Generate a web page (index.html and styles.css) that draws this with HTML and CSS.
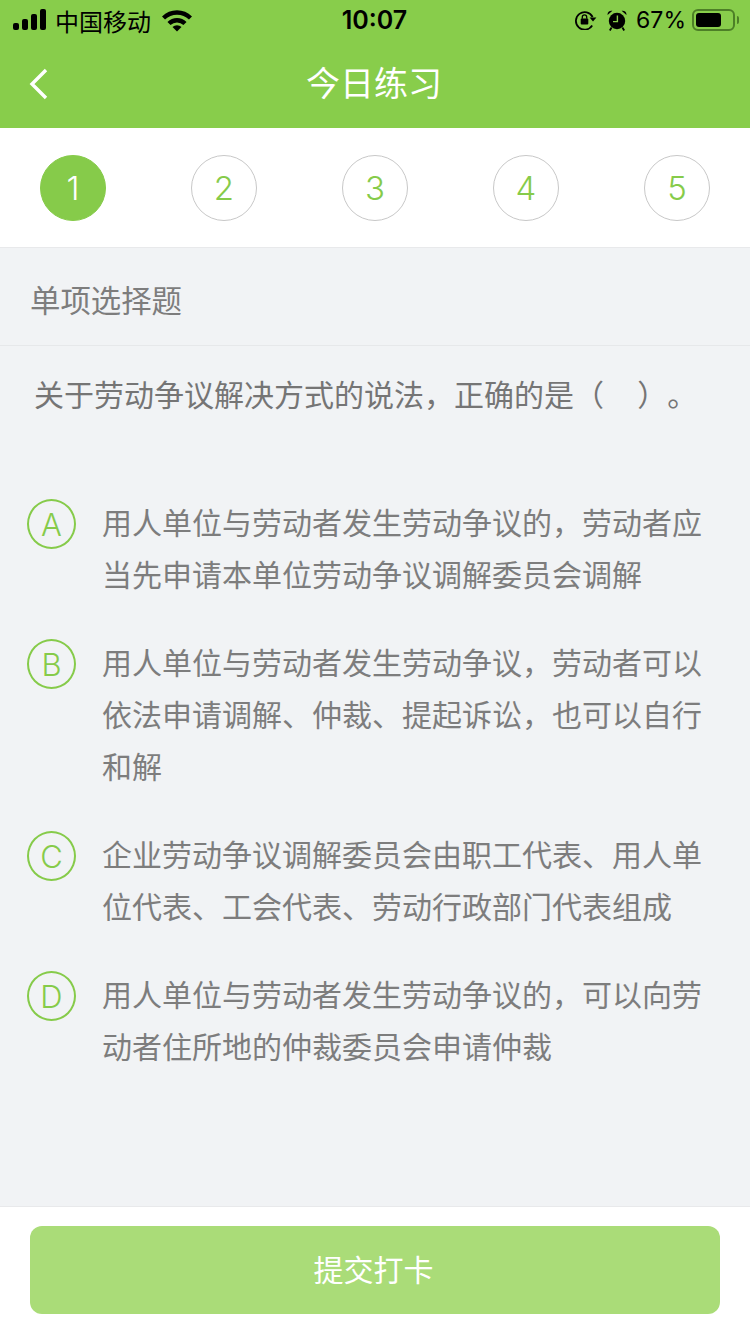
FILE: index.html
```html
<!DOCTYPE html>
<html lang="zh-CN">
<head>
  <meta charset="UTF-8" />
  <title>今日练习</title>
  <link rel="stylesheet" href="styles.css">
</head>
<body>

<div class="page">
  <header class="top">
    <div class="status">
      <div class="status-left">
        <svg class="signal" width="34" height="22" viewBox="0 0 34 22">
          <rect x="0" y="14" width="6" height="7" rx="2" />
          <rect x="9" y="10" width="6" height="11" rx="2" />
          <rect x="18" y="5" width="6" height="16" rx="2" />
          <rect x="27" y="0" width="6" height="21" rx="2" />
        </svg>
        <span class="carrier">中国移动</span>
        <svg class="wifi" width="30" height="23" viewBox="0 0 30 23">
          <path d="M1.5 9 A19.5 19.5 0 0 1 28.5 9" fill="none" stroke="#000" stroke-width="4.4" />
          <path d="M7 14.5 A11.5 11.5 0 0 1 23 14.5" fill="none" stroke="#000" stroke-width="4.4" />
          <path d="M15 22.5 L10.5 18 A6.5 6.5 0 0 1 19.5 18 Z" />
        </svg>
      </div>
      <div class="time">10:07</div>
      <div class="status-right">
        <svg class="orient" width="22" height="20" viewBox="0 0 22 20">
          <path d="M17.2 15.5 A8.8 8.8 0 1 1 17.6 7" fill="none" stroke="#000" stroke-width="1.8" />
          <path d="M14.6 7.5 L21.4 7.5 L18 11.5 Z" />
          <rect x="5.7" y="8.6" width="7.6" height="6" rx="1" />
          <path d="M7.3 8.8 V7 A2.2 2.2 0 0 1 11.7 7 V8.8" fill="none" stroke="#000" stroke-width="1.3" />
        </svg>
        <svg class="alarm" width="20" height="21" viewBox="0 0 20 21">
          <circle cx="10" cy="11" r="8.2" />
          <path d="M0.6 5 A3.8 3.8 0 0 1 5.4 0.8 Z M19.4 5 A3.8 3.8 0 0 0 14.6 0.8 Z" />
          <path d="M10.4 5.6 V11.6 H6" fill="none" stroke="#88cd4b" stroke-width="1.4" />
          <path d="M4.6 17.5 L2.8 20.5 M15.4 17.5 L17.2 20.5" stroke="#000" stroke-width="1.8" />
        </svg>
        <span class="battery-pct">67%</span>
        <div class="battery"><div class="battery-fill"></div></div>
        <div class="battery-tip"></div>
      </div>
    </div>
    <div class="nav">
      <svg class="back" width="20" height="32" viewBox="0 0 20 32">
        <path d="M17 2 L3 16 L17 30" fill="none" stroke="#fff" stroke-width="3.4" />
      </svg>
      <h1>今日练习</h1>
    </div>
  </header>

  <nav class="steps">
    <span class="step active">1</span>
    <span class="step">2</span>
    <span class="step">3</span>
    <span class="step">4</span>
    <span class="step">5</span>
  </nav>

  <main class="content">
    <div class="qtype">单项选择题</div>
    <p class="question">关于劳动争议解决方式的说法，正确的是（&nbsp;&nbsp;&nbsp;&nbsp;）<span class="stop">。</span></p>

    <ul class="options">
      <li class="option">
        <span class="letter">A</span>
        <p>用人单位与劳动者发生劳动争议的，劳动者应当先申请本单位劳动争议调解委员会调解</p>
      </li>
      <li class="option">
        <span class="letter">B</span>
        <p>用人单位与劳动者发生劳动争议，劳动者可以依法申请调解、仲裁、提起诉讼，也可以自行和解</p>
      </li>
      <li class="option">
        <span class="letter">C</span>
        <p>企业劳动争议调解委员会由职工代表、用人单位代表、工会代表、劳动行政部门代表组成</p>
      </li>
      <li class="option">
        <span class="letter">D</span>
        <p>用人单位与劳动者发生劳动争议的，可以向劳动者住所地的仲裁委员会申请仲裁</p>
      </li>
    </ul>
  </main>

  <footer class="bottom">
    <button type="button" class="submit">提交打卡</button>
  </footer>
</div>

</body>
</html>
```

FILE: styles.css
```css
* {
  box-sizing: border-box;
}
body {
  margin: 0;
  background: #f1f3f5;
  font-family: "Liberation Sans", "Noto Sans CJK SC", sans-serif;
}
.page {
  width: 750px;
  height: 1334px;
  display: flex;
  flex-direction: column;
  overflow: hidden;
}

/* header */
.top {
  height: 128px;
  background: #88cd4b;
}
.status {
  height: 40px;
  padding: 0 11px 0 13px;
  display: flex;
  align-items: center;
  justify-content: space-between;
  color: #000;
}
.status-left, .status-right {
  width: 260px;
  display: flex;
  align-items: center;
}
.status-right {
  justify-content: flex-end;
}
.carrier {
  margin-left: 8px;
  font-size: 24px;
}
.wifi {
  margin-left: 11px;
}
.time {
  margin-right: 3px;
  font-size: 25px;
  font-family: "Inter", "Liberation Sans", sans-serif;
  font-weight: 600;
}
.alarm {
  margin-left: 10px;
}
.battery-pct {
  margin-left: 9px;
  font-size: 23px;
  font-family: "Inter", "Liberation Sans", sans-serif;
  font-weight: 400;
}
.battery {
  width: 43px;
  height: 22px;
  margin-left: 6px;
  padding: 2px;
  border: 2px solid #4d7f27;
  border-radius: 6px;
}
.battery-fill {
  width: 25px;
  height: 100%;
  background: #000;
  border-radius: 3px;
}
.battery-tip {
  width: 2px;
  height: 8px;
  margin-left: 2px;
  background: #4d7f27;
  border-radius: 0 2px 2px 0;
}
.nav {
  position: relative;
  height: 88px;
  padding: 0 2px 5px 0;
  display: flex;
  align-items: center;
  justify-content: center;
}
.back {
  position: absolute;
  left: 29px;
  top: 28px;
}
.nav h1 {
  margin: 0;
  color: #fff;
  font-size: 34px;
  font-weight: 400;
  font-family: "Noto Sans CJK SC", sans-serif;
}

/* steps */
.steps {
  height: 120px;
  padding: 0 40px;
  background: #fff;
  border-bottom: 1px solid #e8e9eb;
  display: flex;
  align-items: center;
  justify-content: space-between;
}
.step {
  width: 66px;
  height: 66px;
  border: 1px solid #c8c8c8;
  border-radius: 50%;
  display: flex;
  align-items: center;
  justify-content: center;
  color: #86cb4a;
  font-family: "Inter", "Liberation Sans", sans-serif;
  font-weight: 300;
  font-size: 33px;
}
.step.active {
  background: #86cb4a;
  border-color: #86cb4a;
  color: #fff;
}

/* question */
.content {
  flex: 1;
}
.qtype {
  height: 98px;
  padding: 5px 0 0 30px;
  border-bottom: 1px solid #e6e8ea;
  display: flex;
  align-items: center;
  color: #7d7d7d;
  font-size: 30.4px;
}
.question {
  margin: 0;
  padding: 24px 0 0 34px;
  color: #757575;
  font-size: 30px;
  line-height: 52px;
}
.stop {
  margin-left: 15px;
}
.options {
  margin: 77px 0 0;
  padding: 0;
  list-style: none;
}
.option {
  padding-left: 27px;
  margin-bottom: 36px;
  display: flex;
}
.letter {
  flex: none;
  width: 49px;
  height: 50px;
  border: 2px solid #86cb4a;
  border-radius: 50%;
  display: flex;
  align-items: center;
  justify-content: center;
  color: #86cb4a;
  font-family: "Inter", "Liberation Sans", sans-serif;
  font-weight: 300;
  font-size: 31px;
}
.option p {
  width: 602px;
  margin: -1px 0 1px 26px;
  color: #7d7d7d;
  font-size: 30px;
  line-height: 52px;
}

/* footer */
.bottom {
  height: 128px;
  padding: 19px 30px 0;
  background: #fff;
  border-top: 1px solid #e8e9eb;
}
.submit {
  width: 690px;
  height: 88px;
  padding: 0 3px 4px 0;
  background: #aadc78;
  color: #fff;
  border: none;
  border-radius: 12px;
  font-family: "Liberation Sans", "Noto Sans CJK SC", sans-serif;
  font-size: 30px;
}
```
